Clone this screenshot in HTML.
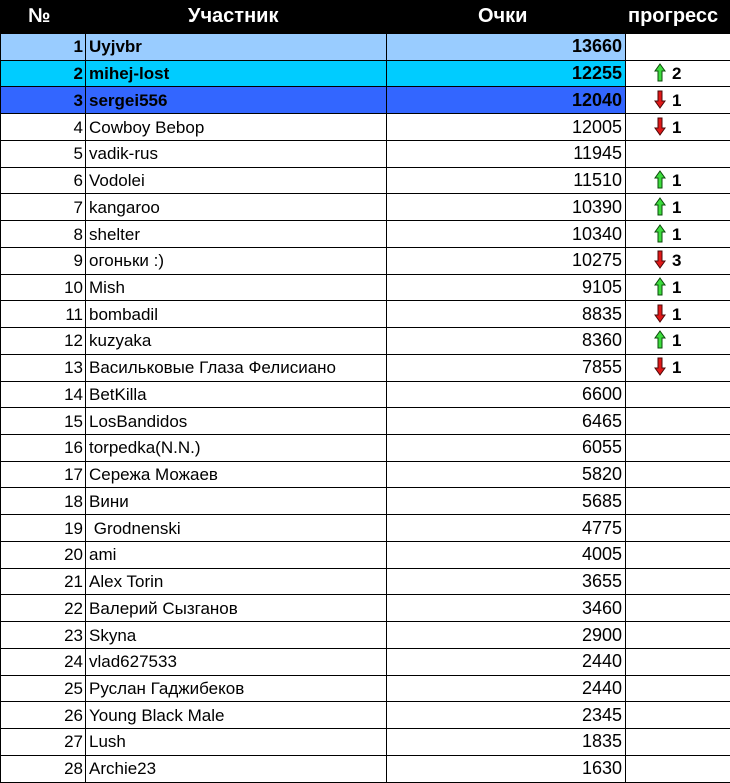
<!DOCTYPE html>
<html><head><meta charset="utf-8"><style>
body{margin:0;width:730px;height:782px;overflow:hidden;background:#fff;font-family:"Liberation Sans",Arial,sans-serif;}
.hd{position:absolute;left:0;top:0;width:730px;height:33px;background:#000;color:#fff;font-weight:bold;font-size:20px;}
.hd span{position:absolute;top:5px;}
table{position:absolute;left:0;top:33px;border-collapse:collapse;table-layout:fixed;width:732px;}
td{height:25.74px;padding:0;border:1px solid #000;font-size:17px;color:#000;white-space:nowrap;overflow:hidden;line-height:25px;}
td.n{width:82px;text-align:right;padding-right:2px;}
td.nm{width:297px;padding-left:3px;}
td.s{width:235px;text-align:right;padding-right:3px;font-size:18px;}
td.p{padding-left:28px;font-weight:bold;}
tr.b td{font-weight:bold;}
svg{vertical-align:-3px;margin-right:6px;}
</style></head><body>
<div class="hd"><span style="left:28px">№</span><span style="left:188px">Участник</span><span style="left:478px">Очки</span><span style="left:628px">прогресс</span></div>
<svg width="0" height="0" style="position:absolute"><defs>
<g id="up"><path d="M6 1 L11 8 L8 8 L8 18 L4 18 L4 8 L1 8 Z" fill="#3ddc3d" stroke="#0a4a0a" stroke-width="1"/></g>
<g id="dn"><path d="M6 18 L11 11 L8 11 L8 1 L4 1 L4 11 L1 11 Z" fill="#e01818" stroke="#4a0808" stroke-width="1"/></g>
</defs></svg>
<table>
<tr class="b" style="background:#99ccff"><td class="n">1</td><td class="nm">Uyjvbr</td><td class="s">13660</td><td class="p" style="background:#fff"></td></tr>
<tr class="b" style="background:#00ccff"><td class="n">2</td><td class="nm">mihej-lost</td><td class="s">12255</td><td class="p" style="background:#fff"><svg width="12" height="19"><use href="#up"/></svg>2</td></tr>
<tr class="b" style="background:#3366ff"><td class="n">3</td><td class="nm">sergei556</td><td class="s">12040</td><td class="p" style="background:#fff"><svg width="12" height="19"><use href="#dn"/></svg>1</td></tr>
<tr><td class="n">4</td><td class="nm">Cowboy Bebop</td><td class="s">12005</td><td class="p"><svg width="12" height="19"><use href="#dn"/></svg>1</td></tr>
<tr><td class="n">5</td><td class="nm">vadik-rus</td><td class="s">11945</td><td class="p"></td></tr>
<tr><td class="n">6</td><td class="nm">Vodolei</td><td class="s">11510</td><td class="p"><svg width="12" height="19"><use href="#up"/></svg>1</td></tr>
<tr><td class="n">7</td><td class="nm">kangaroo</td><td class="s">10390</td><td class="p"><svg width="12" height="19"><use href="#up"/></svg>1</td></tr>
<tr><td class="n">8</td><td class="nm">shelter</td><td class="s">10340</td><td class="p"><svg width="12" height="19"><use href="#up"/></svg>1</td></tr>
<tr><td class="n">9</td><td class="nm">огоньки :)</td><td class="s">10275</td><td class="p"><svg width="12" height="19"><use href="#dn"/></svg>3</td></tr>
<tr><td class="n">10</td><td class="nm">Mish</td><td class="s">9105</td><td class="p"><svg width="12" height="19"><use href="#up"/></svg>1</td></tr>
<tr><td class="n">11</td><td class="nm">bombadil</td><td class="s">8835</td><td class="p"><svg width="12" height="19"><use href="#dn"/></svg>1</td></tr>
<tr><td class="n">12</td><td class="nm">kuzyaka</td><td class="s">8360</td><td class="p"><svg width="12" height="19"><use href="#up"/></svg>1</td></tr>
<tr><td class="n">13</td><td class="nm">Васильковые Глаза Фелисиано</td><td class="s">7855</td><td class="p"><svg width="12" height="19"><use href="#dn"/></svg>1</td></tr>
<tr><td class="n">14</td><td class="nm">BetKilla</td><td class="s">6600</td><td class="p"></td></tr>
<tr><td class="n">15</td><td class="nm">LosBandidos</td><td class="s">6465</td><td class="p"></td></tr>
<tr><td class="n">16</td><td class="nm">torpedka(N.N.)</td><td class="s">6055</td><td class="p"></td></tr>
<tr><td class="n">17</td><td class="nm">Сережа Можаев</td><td class="s">5820</td><td class="p"></td></tr>
<tr><td class="n">18</td><td class="nm">Вини</td><td class="s">5685</td><td class="p"></td></tr>
<tr><td class="n">19</td><td class="nm">&nbsp;Grodnenski</td><td class="s">4775</td><td class="p"></td></tr>
<tr><td class="n">20</td><td class="nm">ami</td><td class="s">4005</td><td class="p"></td></tr>
<tr><td class="n">21</td><td class="nm">Alex Torin</td><td class="s">3655</td><td class="p"></td></tr>
<tr><td class="n">22</td><td class="nm">Валерий Сызганов</td><td class="s">3460</td><td class="p"></td></tr>
<tr><td class="n">23</td><td class="nm">Skyna</td><td class="s">2900</td><td class="p"></td></tr>
<tr><td class="n">24</td><td class="nm">vlad627533</td><td class="s">2440</td><td class="p"></td></tr>
<tr><td class="n">25</td><td class="nm">Руслан Гаджибеков</td><td class="s">2440</td><td class="p"></td></tr>
<tr><td class="n">26</td><td class="nm">Young Black Male</td><td class="s">2345</td><td class="p"></td></tr>
<tr><td class="n">27</td><td class="nm">Lush</td><td class="s">1835</td><td class="p"></td></tr>
<tr><td class="n">28</td><td class="nm">Archie23</td><td class="s">1630</td><td class="p"></td></tr>
</table>
</body></html>
